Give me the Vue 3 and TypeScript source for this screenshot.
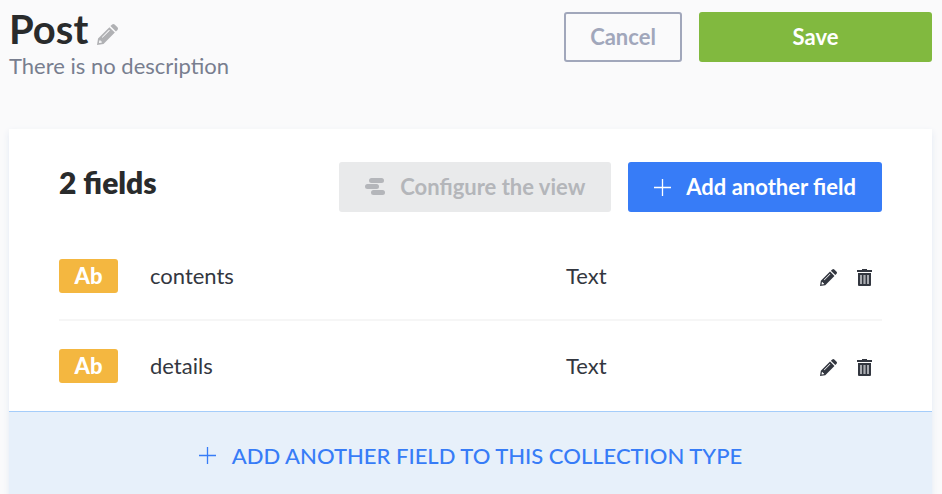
<script setup lang="ts">
interface Field {
  name: string
  type: string
}

const collection = { name: 'Post', description: 'There is no description' }

const fields: Field[] = [
  { name: 'contents', type: 'Text' },
  { name: 'details', type: 'Text' },
]
</script>

<template>
  <main class="page">
    <header class="page-header">
      <div class="heading">
        <div class="title-line">
          <h1>{{ collection.name }}</h1>
          <button class="icon-button muted" type="button" aria-label="Edit name">
            <svg class="title-pencil" viewBox="0 0 20 20" aria-hidden="true">
              <path fill="currentColor" fill-rule="evenodd" d="M11.8 3 17 8.2 6.2 19 0 20 1 13.8ZM2.2 15.6 1.8 18.2 4.4 17.8 4.6 16.6 3.4 16.5 3.3 15.4ZM11.6 5.5 4.6 12.5 5.2 13.1 12.2 6.1Z" />
              <path fill="currentColor" d="m12.8 2 1.6-1.5q1.2-1 2.4 0l2.7 2.7q1 1.2 0 2.4L18 7.2Z" />
            </svg>
          </button>
        </div>
        <p class="description">{{ collection.description }}</p>
      </div>
      <div class="header-actions">
        <button class="button cancel" type="button">Cancel</button>
        <button class="button save" type="button">Save</button>
      </div>
    </header>

    <section class="card">
      <div class="card-header">
        <h2>{{ fields.length }} fields</h2>
        <div class="card-actions">
          <button class="button configure" type="button" disabled>
            <svg class="layout-icon" viewBox="0 0 20 18" aria-hidden="true">
              <rect x="4" y="0" width="15" height="5" rx="2.5" fill="currentColor" />
              <rect x="0" y="6" width="14" height="5" rx="2.5" fill="currentColor" />
              <rect x="6" y="12" width="14" height="5" rx="2.5" fill="currentColor" />
            </svg>
            Configure the view
          </button>
          <button class="button add" type="button">
            <svg class="plus" viewBox="0 0 17 17" aria-hidden="true">
              <path d="M8.5 0V17M0 8.5H17" stroke="currentColor" stroke-width="1.3" />
            </svg>
            Add another field
          </button>
        </div>
      </div>

      <table class="fields" aria-label="Fields">
        <tbody>
          <tr v-for="field in fields" :key="field.name">
            <td class="badge-cell"><span class="badge">Ab</span></td>
            <td class="name-cell">{{ field.name }}</td>
            <td>{{ field.type }}</td>
            <td>
              <div class="tools">
                <button class="icon-button" type="button" :aria-label="`Edit ${field.name}`">
                  <svg class="row-pencil" viewBox="0 0 20 20" aria-hidden="true">
                    <path fill="currentColor" fill-rule="evenodd" d="M11.8 3 17 8.2 6.2 19 0 20 1 13.8ZM2.2 15.6 1.8 18.2 4.4 17.8 4.6 16.6 3.4 16.5 3.3 15.4ZM11.6 5.5 4.6 12.5 5.2 13.1 12.2 6.1Z" />
                    <path fill="currentColor" d="m12.8 2 1.6-1.5q1.2-1 2.4 0l2.7 2.7q1 1.2 0 2.4L18 7.2Z" />
                  </svg>
                </button>
                <button class="icon-button" type="button" :aria-label="`Delete ${field.name}`">
                  <svg class="trash" viewBox="0 0 15 17" aria-hidden="true">
                    <path fill="currentColor" d="M0 1H5V0H10V1H15V3H0Z" />
                    <path fill="currentColor" fill-rule="evenodd" d="M1 4H14V16Q14 17 13 17H2Q1 17 1 16ZM3 6V15H12V6Z" />
                    <path fill="#a9abb0" d="M3 6H12V15H3Z" />
                    <path stroke="currentColor" stroke-width="1.4" d="M5.7 5V16M9.3 5V16" />
                  </svg>
                </button>
              </div>
            </td>
          </tr>
        </tbody>
      </table>

      <button class="add-row" type="button">
        <svg class="plus" viewBox="0 0 17 17" aria-hidden="true">
          <path d="M8.5 0V17M0 8.5H17" stroke="currentColor" stroke-width="1.3" />
        </svg>
        Add another field to this collection type
      </button>
    </section>
  </main>
</template>

<style>
body {
  background: #fafafb;
}
</style>

<style scoped>
.page {
  padding: 12px 10px 0 9px;
  font-family: Lato, 'Open Sans', sans-serif;
  font-size: 22px;
  line-height: 26px;
  color: #333740;
}

.page-header {
  display: flex;
  justify-content: space-between;
  align-items: flex-start;
  margin-bottom: 50px;
}

.title-line {
  display: flex;
  align-items: flex-end;
  gap: 9px;
}

h1,
h2,
p {
  margin: 0;
}

h1 {
  font-size: 40px;
  line-height: 35px;
  font-weight: 700;
  color: #292b2c;
}

h2 {
  font-size: 30px;
  line-height: 40px;
  font-weight: 800;
  color: #292b2c;
}

.description {
  margin-top: 6px;
  color: #787e8f;
  font-variant-ligatures: common-ligatures discretionary-ligatures;
}

.header-actions {
  display: flex;
  gap: 17px;
}

button {
  font: inherit;
  cursor: pointer;
}

.button {
  display: flex;
  align-items: center;
  justify-content: center;
  box-sizing: border-box;
  height: 50px;
  padding: 0 26px;
  border: 0;
  border-radius: 3px;
  font-weight: 700;
  white-space: nowrap;
}

.cancel {
  width: 118px;
  padding: 0;
  border: 2px solid #a1a7bb;
  background: transparent;
  color: #a1a7bb;
}

.save {
  width: 233px;
  background: #81b93f;
  color: #fff;
}

.card {
  background: #fff;
  box-shadow: 0 3px 7px #e3e9f3;
}

.card-header {
  display: flex;
  justify-content: space-between;
  padding: 33px 50px 19px;
}

.card-actions {
  display: flex;
  gap: 17px;
}

.configure {
  gap: 15px;
  background: #e9eaeb;
  color: #b4b6ba;
  cursor: default;
}

.add {
  gap: 15px;
  background: #377cf7;
  color: #fff;
}

.layout-icon {
  width: 20px;
  height: 18px;
}

.plus {
  width: 17px;
  height: 17px;
}

.fields {
  width: calc(100% - 100px);
  margin: 0 50px;
  border-collapse: collapse;
  table-layout: fixed;
}

td {
  box-sizing: border-box;
  height: 90px;
  padding: 0;
  vertical-align: middle;
}

tr + tr td {
  box-shadow: 0 -2px #f6f6f6;
}

.badge-cell {
  width: 91px;
}

.name-cell {
  width: 416px;
}

.badge {
  display: block;
  width: 59px;
  border-radius: 3px;
  background: #f4b740;
  color: #fff;
  font-weight: 900;
  line-height: 34px;
  text-align: center;
}

.tools {
  display: flex;
  align-items: center;
  justify-content: flex-end;
  gap: 20px;
  padding: 2px 10px 0 0;
}

.icon-button {
  display: flex;
  padding: 0;
  border: 0;
  background: none;
  color: #333740;
}

.muted {
  padding-bottom: 2px;
  color: #b0b1b4;
}

.title-pencil {
  width: 21px;
  height: 21px;
}

.row-pencil {
  width: 17px;
  height: 17px;
}

.trash {
  width: 15px;
  height: 17px;
}

.add-row {
  display: flex;
  align-items: center;
  justify-content: center;
  gap: 16px;
  width: 100%;
  height: 88px;
  padding: 0;
  border: 0;
  border-top: 1px solid #a5cdfa;
  background: #e7f0fa;
  color: #377cf7;
  font-weight: 500;
  text-transform: uppercase;
}
</style>
